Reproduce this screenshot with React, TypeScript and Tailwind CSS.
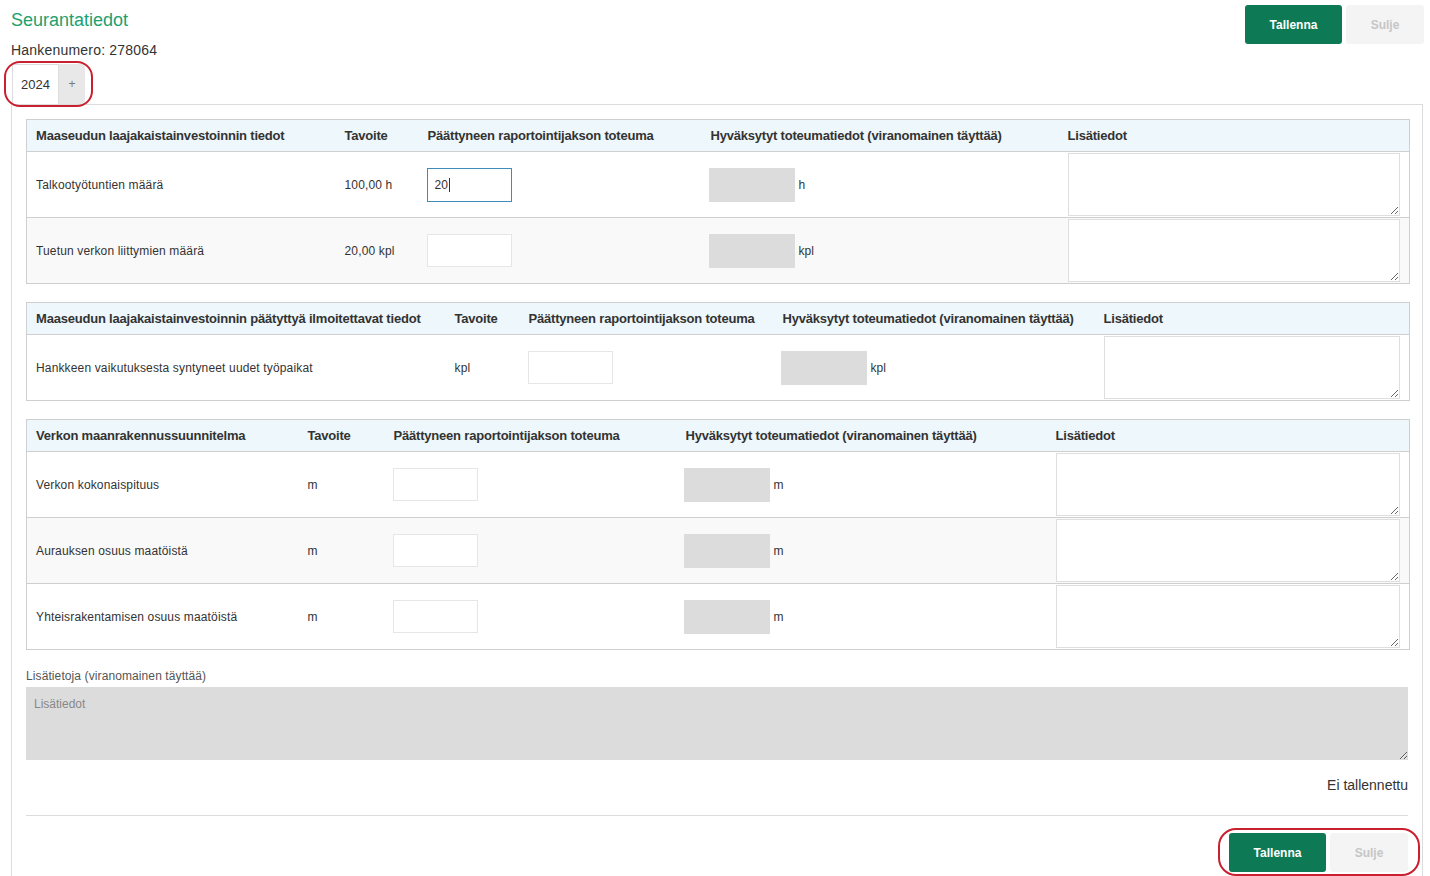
import React from "react";

type Row = {
  label: string;
  target: string;
  value?: string;
  focused?: boolean;
  unit: string;
};

function DataTable({
  cols,
  headers,
  rows,
}: {
  cols: string[];
  headers: string[];
  rows: Row[];
}) {
  return (
    <table className="w-full table-fixed border-collapse border border-[#cfcfcf] text-[12px] text-[#333]">
      <colgroup>
        {cols.map((c, i) => (
          <col key={i} className={c} />
        ))}
      </colgroup>
      <thead>
        <tr className="bg-[#eef7fb]">
          {headers.map((h, i) => (
            <th
              key={i}
              className="h-[32px] px-[9px] text-left align-middle text-[13px] font-bold tracking-[-0.2px] whitespace-nowrap text-[#333]"
            >
              {h}
            </th>
          ))}
        </tr>
      </thead>
      <tbody>
        {rows.map((r, i) => (
          <tr
            key={i}
            className={
              (i % 2 === 1 ? "bg-[#f9f9f9] " : "bg-white ") +
              "border-t border-[#cfcfcf]"
            }
          >
            <td className="h-[65px] px-[9px] align-middle whitespace-nowrap tracking-[0.15px]">{r.label}</td>
            <td className="px-[9px] align-middle whitespace-nowrap tracking-[0.15px]">{r.target}</td>
            <td className="px-[8px] align-middle">
              {r.focused ? (
                <div className="flex h-[34px] w-[85px] items-center border border-[#3d8db8] bg-white px-[7px] text-[12px]">
                  {r.value}
                  <span className="ml-[1px] inline-block h-[14px] w-[1px] bg-[#333]" />
                </div>
              ) : (
                <div className="h-[33px] w-[85px] border border-[#e6e6e6] bg-white" />
              )}
            </td>
            <td className="px-[7px] align-middle">
              <div className="flex items-center gap-[4px]">
                <div className="h-[34px] w-[86px] bg-[#dcdcdc]" />
                <span>{r.unit}</span>
              </div>
            </td>
            <td className="px-[9px] py-[1px] align-middle">
              <textarea
                readOnly
                className="block h-[63px] w-full resize-y border border-[#dedede] bg-white outline-none"
              />
            </td>
          </tr>
        ))}
      </tbody>
    </table>
  );
}

function Buttons() {
  return (
    <div className="flex gap-[4px]">
      <button className="h-[39px] w-[97px] rounded-[3px] bg-[#0e7a55] text-[12px] font-bold text-white">
        Tallenna
      </button>
      <button className="h-[39px] w-[78px] rounded-[3px] bg-[#f4f4f4] text-[12px] font-bold text-[#c6c6c6]">
        Sulje
      </button>
    </div>
  );
}

export default function App() {
  const headers3 = [
    "Päättyneen raportointijakson toteuma",
    "Hyväksytyt toteumatiedot (viranomainen täyttää)",
    "Lisätiedot",
  ];
  return (
    <div className="relative min-h-[876px] bg-white pl-[11px] pr-[6px] font-['Liberation_Sans',Arial,sans-serif] text-[#333]">
      <div className="flex items-start justify-between">
        <div>
          <h1 className="pt-[9px] text-[18px] leading-[22px] text-[#21a06e]">Seurantatiedot</h1>
          <div className="mt-[11px] text-[14px] leading-[16px] tracking-[0.2px]">Hankenumero: 278064</div>
          <div className="mt-[6px] ml-[1px] flex h-[40px]">
            <div className="flex w-[47px] items-center justify-center border border-b-0 border-[#ddd] bg-white text-[13px]">
              2024
            </div>
            <div className="flex w-[26px] items-center justify-center bg-[#e8e8e8] text-[12px] text-[#777]">
              +
            </div>
          </div>
        </div>
        <div className="pt-[5px]">
          <Buttons />
        </div>
      </div>

      <div className="mr-[1px] border border-b-0 border-[#dcdcdc] px-[14px] pt-[14px] pb-[20px]">
        <DataTable
          cols={["w-[309px]", "w-[83px]", "w-[283px]", "w-[357px]", "w-[351px]"]}
          headers={["Maaseudun laajakaistainvestoinnin tiedot", "Tavoite", ...headers3]}
          rows={[
            { label: "Talkootyötuntien määrä", target: "100,00 h", value: "20", focused: true, unit: "h" },
            { label: "Tuetun verkon liittymien määrä", target: "20,00 kpl", unit: "kpl" },
          ]}
        />
        <div className="h-[18px]" />
        <DataTable
          cols={["w-[419px]", "w-[74px]", "w-[254px]", "w-[321px]", "w-[315px]"]}
          headers={["Maaseudun laajakaistainvestoinnin päätyttyä ilmoitettavat tiedot", "Tavoite", ...headers3]}
          rows={[{ label: "Hankkeen vaikutuksesta syntyneet uudet työpaikat", target: "kpl", unit: "kpl" }]}
        />
        <div className="h-[18px]" />
        <DataTable
          cols={["w-[272px]", "w-[86px]", "w-[292px]", "w-[370px]", "w-[363px]"]}
          headers={["Verkon maanrakennussuunnitelma", "Tavoite", ...headers3]}
          rows={[
            { label: "Verkon kokonaispituus", target: "m", unit: "m" },
            { label: "Aurauksen osuus maatöistä", target: "m", unit: "m" },
            { label: "Yhteisrakentamisen osuus maatöistä", target: "m", unit: "m" },
          ]}
        />

        <div className="mt-[19px] text-[12px] leading-[14px] tracking-[0.1px] text-[#555]">Lisätietoja (viranomainen täyttää)</div>
        <textarea
          readOnly
          placeholder="Lisätiedot"
          className="mt-[4px] block h-[73px] w-full resize-y bg-[#dcdcdc] px-[8px] py-[8px] text-[12px] text-[#333] outline-none placeholder:text-[#888]"
        />

        <div className="mt-[16px] text-right text-[14px] leading-[18px] text-[#333]">Ei tallennettu</div>
        <div className="mt-[21px] border-t border-[#dcdcdc]" />
        <div className="mt-[17px] flex justify-end">
          <Buttons />
        </div>
      </div>

      {/* red annotation outlines */}
      <div className="pointer-events-none absolute left-[4px] top-[61px] h-[46px] w-[89px] rounded-[16px] border-2 border-[#c9202f]" />
      <div className="pointer-events-none absolute left-[1218px] top-[828px] h-[48px] w-[202px] rounded-[18px] border-2 border-[#c9202f]" />
    </div>
  );
}
